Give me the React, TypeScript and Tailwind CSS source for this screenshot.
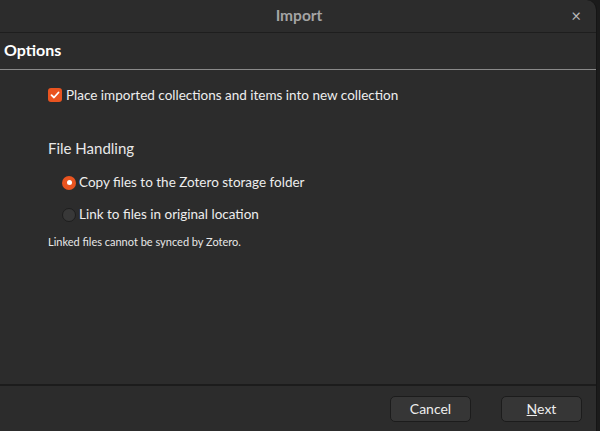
import React from "react";

export default function App() {
  return (
    <div className="w-[600px] h-[431px] bg-[#1b1b1b] flex overflow-hidden" style={{ fontFamily: "Lato, 'Noto Sans', sans-serif" }}>
      <div className="w-[597px] h-full bg-[#2c2c2c] rounded-tr-[10px] flex flex-col border-r border-[#151515]">
        {/* Title bar */}
        <div className="h-[33px] flex items-center relative border-b border-[#1e1e1e] shrink-0">
          <div className="flex-1 text-center text-[15.5px] font-bold text-[#a4a4a4] pl-[2px]">Import</div>
          <div className="absolute right-[15px] top-[7px] text-[#b8b8b8] text-[17px] leading-none">×</div>
        </div>
        {/* Header */}
        <div className="h-[37px] flex items-center px-[4px] pb-[3px] border-b border-[#8a8a8a] shrink-0">
          <span className="text-[16px] font-bold text-white">Options</span>
        </div>
        {/* Content */}
        <div className="flex-1 flex flex-col pl-[48px] pt-[15px]">
          <div className="flex items-center gap-[4px] h-[20px]">
            <div className="w-[14px] h-[14px] rounded-[3px] bg-[#e95420] flex items-center justify-center">
              <svg width="10" height="10" viewBox="0 0 10 10"><path d="M1.5 5.2 L4 7.5 L8.5 2.5" stroke="white" strokeWidth="1.8" fill="none" strokeLinecap="round" strokeLinejoin="round" /></svg>
            </div>
            <span className="text-[13.5px] text-[#eeeeee]">Place imported collections and items into new collection</span>
          </div>
          <div className="mt-[32px] text-[15px] text-[#e8e8e8]">File Handling</div>
          <div className="pl-[14px] mt-[13px] flex flex-col gap-[12px]">
            <div className="flex items-center gap-[3px] h-[20px]">
              <div className="w-[14px] h-[14px] rounded-full bg-[#e95420] flex items-center justify-center">
                <div className="w-[5px] h-[5px] rounded-full bg-white" />
              </div>
              <span className="text-[13.5px] text-[#eeeeee]">Copy files to the Zotero storage folder</span>
            </div>
            <div className="flex items-center gap-[3px] h-[20px]">
              <div className="w-[14px] h-[14px] rounded-full bg-[#383838] border border-[#1e1e1e]" />
              <span className="text-[13.5px] text-[#eeeeee]">Link to files in original location</span>
            </div>
          </div>
          <div className="mt-[9px] text-[11px] text-[#e8e8e8]">Linked files cannot be synced by Zotero.</div>
        </div>
        {/* Footer */}
        <div className="h-[47px] border-t-2 border-[#1c1c1c] flex items-center justify-end gap-[30px] pr-[14px] shrink-0">
          <button className="w-[81px] h-[26px] rounded-[5px] bg-[#363636] border border-[#1c1c1c] text-[14px] text-[#eeeeee]">Cancel</button>
          <button className="w-[81px] h-[26px] rounded-[5px] bg-[#363636] border border-[#1c1c1c] text-[14px] text-[#eeeeee]"><span className="underline">N</span>ext</button>
        </div>
      </div>
    </div>
  );
}
